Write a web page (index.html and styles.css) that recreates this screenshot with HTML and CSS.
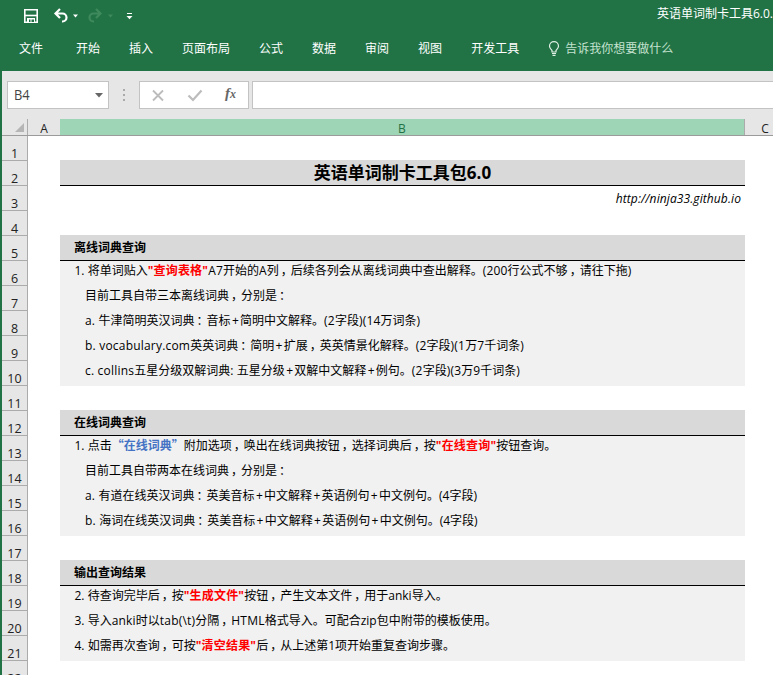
FILE: index.html
```html
<!DOCTYPE html>
<html lang="zh-CN">
<head>
<meta charset="utf-8">
<title>英语单词制卡工具6.0</title>
<link rel="stylesheet" href="styles.css">
</head>
<body>
<div class="window">
  <header class="ribbon">
    <div class="titlebar">
      <svg class="quick" width="120" height="20" viewBox="0 0 120 20" fill="none">
        <path d="M4.800 3.800h12.400v12.400H4.800z" stroke="#fff" stroke-width="1.600"/>
        <path d="M5 9.500h12" stroke="#fff" stroke-width="1.600"/>
        <path d="M7 12h8v4H7z" fill="#fff"/>
        <path d="M9 13.500h1.500V16H9zM11.500 13.500H14V16h-2.500z" fill="#217346"/>
        <path d="M36 7.500h6.500a4 4 0 0 1 0 8H42M40 3l-4.500 4.500L40 12" stroke="#fff" stroke-width="2.200"/>
        <path d="M53 8.500h5l-2.500 3z" fill="#fff"/>
        <path d="M80 7.500h-6.500a4 4 0 0 0 0 8H74M76 3l4.500 4.500L76 12" stroke="#3f8a5d" stroke-width="2.200"/>
        <path d="M88 8.500h5l-2.500 3z" fill="#3f8a5d"/>
        <path d="M107 7.500h5" stroke="#fff"/>
        <path d="M106.500 10h6l-3 3.200z" fill="#fff"/>
      </svg>
      <span class="doc-title">英语单词制卡工具6.0.</span>
    </div>
    <nav class="tabs">
      <span class="file">文件</span><span>开始</span><span>插入</span><span>页面布局</span><span>公式</span><span>数据</span><span>审阅</span><span>视图</span><span>开发工具</span>
      <span class="tell"><svg width="12" height="16" viewBox="0 0 12 16" fill="none" stroke="#e0f0e5" stroke-width="1.200"><path d="M4 11V9.500C2.500 8 1.500 7 1.500 5.200a4.500 4.500 0 0 1 9 0C10.500 7 9.500 8 8 9.500V11zM4 12.500h4M4.500 14.300h3"/></svg>告诉我你想要做什么</span>
    </nav>
  </header>
  <div class="formula-bar">
    <div class="name-box"><span>B4</span><svg width="8" height="5" viewBox="0 0 8 5"><path d="M0 0h8L4 4.500z" fill="#666"/></svg></div>
    <div class="grip"><i></i><i></i><i></i></div>
    <div class="actions">
      <svg width="108" height="26" viewBox="0 0 108 26" fill="none"><path d="M13 8.500l10 10M23 8.500l-10 10" stroke="#bcbcbc" stroke-width="1.800"/><path d="M48.500 13.500l4.500 4.500 8.500-9.500" stroke="#bcbcbc" stroke-width="2.200"/></svg>
      <span class="fx">f<small>x</small></span>
    </div>
    <div class="formula-input"></div>
  </div>
  <div class="columns">
    <div class="corner"><svg width="9" height="9" viewBox="0 0 9 9"><path d="M9 0v9H0z" fill="#b5b5b5"/></svg></div>
    <div class="col-a">A</div><div class="col-b">B</div><div class="col-c">C</div>
  </div>
  <div class="grid">
    <div class="row-numbers">
      <div>1</div><div>2</div><div>3</div><div>4</div><div>5</div><div>6</div><div>7</div><div>8</div><div>9</div><div>10</div><div>11</div><div>12</div><div>13</div><div>14</div><div>15</div><div>16</div><div>17</div><div>18</div><div>19</div><div>20</div><div>21</div><div>22</div>
    </div>
    <main class="sheet">
      <div class="cell first"></div>
      <div class="cell title">英语单词制卡工具包6.0</div>
      <div class="cell link">http://ninja33.github.io</div>
      <div class="cell"></div>
      <div class="cell head">离线词典查询</div>
      <div class="cell body">1. 将单词贴入<b>"查询表格"</b><span class="latin">A7</span>开始的A列<u>，</u>后续各列会从离线词典中查出解释。<span class="latin">(200</span>行公式不够<u>，</u>请往下拖)</div>
      <div class="cell body sub">目前工具自带三本离线词典<u>，</u>分别是<u>：</u></div>
      <div class="cell body sub"><span class="latin">a. </span>牛津简明英汉词典<u>：</u>音标<i>+</i>简明中文解释。<span class="latin">(2</span>字段<span class="latin">)(14</span>万词条)</div>
      <div class="cell body sub"><span class="latin">b. vocabulary.com</span>英英词典<u>：</u>简明<i>+</i>扩展<u>，</u>英英情景化解释。<span class="latin">(2</span>字段<span class="latin">)(1</span>万<span class="latin">7</span>千词条)</div>
      <div class="cell body sub"><span class="latin">c. collins</span>五星分级双解词典<span class="latin">: </span>五星分级<i>+</i>双解中文解释<i>+</i>例句。<span class="latin">(2</span>字段<span class="latin">)(3</span>万<span class="latin">9</span>千词条)</div>
      <div class="cell"></div>
      <div class="cell head">在线词典查询</div>
      <div class="cell body">1. 点击<b class="blue">“在线词典”</b>附加选项<u>，</u>唤出在线词典按钮<u>，</u>选择词典后<u>，</u>按<b>"在线查询"</b>按钮查询。</div>
      <div class="cell body sub">目前工具自带两本在线词典<u>，</u>分别是<u>：</u></div>
      <div class="cell body sub"><span class="latin">a. </span>有道在线英汉词典<u>：</u>英美音标<i>+</i>中文解释<i>+</i>英语例句<i>+</i>中文例句。(4字段)</div>
      <div class="cell body sub"><span class="latin">b. </span>海词在线英汉词典<u>：</u>英美音标<i>+</i>中文解释<i>+</i>英语例句<i>+</i>中文例句。(4字段)</div>
      <div class="cell"></div>
      <div class="cell head">输出查询结果</div>
      <div class="cell body">2. 待查询完毕后<u>，</u>按<b>"生成文件"</b>按钮<u>，</u>产生文本文件<u>，</u>用于anki导入。</div>
      <div class="cell body">3. 导入<span class="latin">anki</span>时以<span class="latin">tab(\t)</span>分隔<u>，</u><span class="latin">HTML</span>格式导入。可配合zip包中附带的模板使用。</div>
      <div class="cell body">4. 如需再次查询<u>，</u>可按<b>"清空结果"</b>后<u>，</u>从上述第1项开始重复查询步骤。</div>
    </main>
  </div>
</div>
</body>
</html>
```
FILE: styles.css
```css
* { box-sizing: border-box; }
body {
  margin: 0;
  font: 12px/1 "Open Sans", "Noto Sans CJK SC", sans-serif;
  color: #000;
  background: #fff;
}
.window { height: 675px; overflow: hidden; border-left: 2px solid #217346; }
.ribbon { height: 71px; background: #217346; color: #fff; }
.titlebar { height: 31px; display: flex; justify-content: space-between; padding: 6px 0 0 18px; }
.doc-title { white-space: nowrap; line-height: 18px; margin-top: -1px; }
.tabs { display: flex; gap: 29px; padding-left: 17px; line-height: 35px; white-space: nowrap; }
.tabs .file { margin-right: 4px; }
.tell { display: flex; align-items: center; gap: 5px; color: #c5e2cf; }
.formula-bar { height: 48px; background: #e6e6e6; display: flex; padding: 10px 0 10px 5px; }
.name-box, .actions, .formula-input { height: 28px; border: 1px solid #c3c3c3; background: #fff; }
.name-box { width: 102px; display: flex; align-items: center; justify-content: space-between; padding: 0 5px 0 6px; color: #444; font-size: 14px; }
.name-box span { transform: scaleX(.92); transform-origin: left; }
.grip { width: 30px; display: flex; flex-direction: column; align-items: center; justify-content: center; gap: 3px; }
.grip i { width: 2px; height: 2px; background: #aaa; }
.actions { width: 110px; position: relative; }
.fx { position: absolute; left: 85px; top: 3px; font: italic bold 15px "Liberation Serif", serif; color: #666; }
.fx small { font-size: 12px; }
.formula-input { flex: 1; margin-left: 3px; border-right: 0; }
.columns { height: 17px; display: flex; background: #e6e6e6; border-bottom: 1px solid #9b9b9b; line-height: 19px; text-align: center; color: #222; }
.corner { width: 26px; border-right: 1px solid #ababab; display: flex; justify-content: flex-end; align-items: flex-end; padding: 0 3px 3px 0; }
.col-a { width: 32px; }
.col-b { width: 685px; background: #9fd5b7; color: #217346; border-right: 1px solid #ababab; }
.col-c { flex: 1; padding-left: 12px; }
.grid { display: flex; }
.row-numbers { width: 26px; background: #e6e6e6; border-right: 1px solid #ababab; text-align: center; flex: none; color: #222; }
.row-numbers div { height: 25px; border-bottom: 1px solid #ababab; padding-top: 11px; font-size: 12.500px; line-height: 14px; }
.sheet { width: 685px; margin-left: 32px; }
.cell { height: 25px; white-space: nowrap; }
.cell.first { height: 24px; }
.title, .head { background: #d9d9d9; border-bottom: 1px solid #000; font-weight: bold; height: 26px; margin-bottom: -1px; position: relative; }
.title { text-align: center; font-size: 17px; line-height: 25px; }
.link { text-align: right; font-style: italic; line-height: 27px; padding-right: 4px; letter-spacing: .1px; }
.head { padding-left: 14px; line-height: 25px; }
.body { background: #f1f1f1; box-shadow: 0 1px #f1f1f1; padding-left: 14.500px; line-height: 22px; }
.sub { padding-left: 25px; }
.body b { color: #f00; letter-spacing: .2px; }
.body b.blue { color: #4472c4; font-family: "Noto Sans CJK SC", sans-serif; letter-spacing: 0; line-height: 1; }
.body u { position: relative; left: 2px; text-decoration: none; }
.body i { font-style: normal; padding: 0 1.300px; }
.latin { letter-spacing: .2px; }
```
